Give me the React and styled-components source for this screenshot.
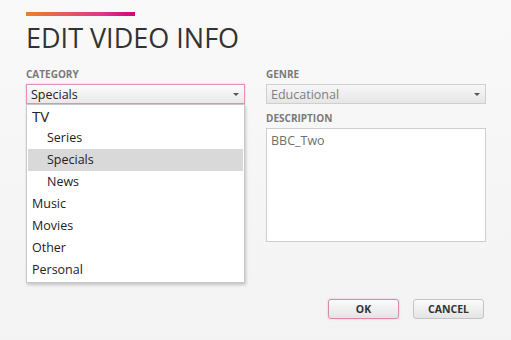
import styled, { createGlobalStyle } from "styled-components";

const categories = [
  { label: "TV", level: 0, big: true },
  { label: "Series", level: 1 },
  { label: "Specials", level: 1, selected: true },
  { label: "News", level: 1 },
  { label: "Music", level: 0 },
  { label: "Movies", level: 0 },
  { label: "Other", level: 0 },
  { label: "Personal", level: 0 },
];

export default function App() {
  return (
    <>
      <GlobalStyle />
      <Page>
        <AccentBar />
        <Title>EDIT VIDEO INFO</Title>
        <Columns>
          <Field>
            <Label>CATEGORY</Label>
            <Select focused>
              <span>Specials</span>
              <Arrow />
            </Select>
            <Menu>
              {categories.map((c) => (
                <MenuItem
                  key={c.label}
                  level={c.level}
                  big={c.big}
                  selected={c.selected}
                >
                  {c.label}
                </MenuItem>
              ))}
            </Menu>
          </Field>
          <Field>
            <Label>GENRE</Label>
            <Select disabled>
              <span>Educational</span>
              <Arrow />
            </Select>
            <Label spaced>DESCRIPTION</Label>
            <TextArea>BBC_Two</TextArea>
          </Field>
        </Columns>
        <Actions>
          <Button primary>OK</Button>
          <Button>CANCEL</Button>
        </Actions>
      </Page>
    </>
  );
}

const GlobalStyle = createGlobalStyle`
  html, body {
    margin: 0;
    padding: 0;
    background: #f6f6f6;
  }
  body {
    font-family: "Open Sans", "Noto Sans", sans-serif;
  }
`;

const Page = styled.div`
  width: 511px;
  height: 340px;
  box-sizing: border-box;
  padding: 12px 27px 21px 26px;
  display: flex;
  flex-direction: column;
  background: linear-gradient(to bottom, #f9f9f9, #f3f3f3);
`;

const AccentBar = styled.div`
  width: 109px;
  height: 4px;
  background: linear-gradient(to right, #e8832a, #e0358a 70%, #d6007a);
`;

const Title = styled.h1`
  margin: 5px 0 0;
  font-size: 27px;
  line-height: 34px;
  font-weight: 400;
  color: #333333;
  letter-spacing: 0;
`;

const Columns = styled.div`
  display: grid;
  grid-template-columns: 219px 220px;
  column-gap: 21px;
  margin-top: 12px;
`;

const Field = styled.div`
  position: relative;
  display: flex;
  flex-direction: column;
`;

const Label = styled.div`
  font-size: 10px;
  line-height: 14px;
  font-weight: 700;
  color: #7a7a7a;
  margin: ${({ spaced }) => (spaced ? "7px 0 3px" : "0 0 3px")};
`;

const Select = styled.div`
  height: 20px;
  box-sizing: border-box;
  display: flex;
  align-items: center;
  justify-content: space-between;
  padding: 0 5px 0 4px;
  font-size: 12.5px;
  color: ${({ disabled }) => (disabled ? "#808080" : "#222222")};
  border: 1px solid ${({ focused }) => (focused ? "#e38fc0" : "#cfcfcf")};
  background: ${({ focused }) =>
    focused
      ? "linear-gradient(to bottom, #fbfbfb, #e9e9e9)"
      : "linear-gradient(to bottom, #f7f7f7, #e6e6e6)"};
  box-shadow: ${({ focused }) =>
    focused ? "0 0 2px rgba(222, 90, 170, 0.35)" : "none"};
`;

const Arrow = styled.i`
  width: 0;
  height: 0;
  border-left: 3px solid transparent;
  border-right: 3px solid transparent;
  border-top: 3px solid #555;
`;

const Menu = styled.ul`
  position: absolute;
  top: 37px;
  left: 0;
  right: 0;
  margin: 0;
  padding: 0 1px 1px;
  list-style: none;
  background: #ffffff;
  border: 1px solid #c8c8c8;
  box-shadow: 1px 2px 3px rgba(0, 0, 0, 0.2);
  z-index: 2;
`;

const MenuItem = styled.li`
  height: 22px;
  line-height: 22px;
  padding-left: ${({ level }) => (level ? "19px" : "4px")};
  font-size: ${({ big }) => (big ? "15px" : "12.5px")};
  color: #222222;
  background: ${({ selected }) => (selected ? "#d9d9d9" : "transparent")};
`;

const TextArea = styled.div`
  height: 114px;
  box-sizing: border-box;
  padding: 3px 4px;
  font-size: 12.5px;
  color: #707070;
  background: #ffffff;
  border: 1px solid #cfcfcf;
`;

const Actions = styled.div`
  margin-top: auto;
  display: flex;
  justify-content: flex-end;
  gap: 14px;
`;

const Button = styled.button`
  width: 71px;
  height: 20px;
  padding: 0;
  font-family: inherit;
  font-size: 10.5px;
  font-weight: 700;
  color: #333333;
  border-radius: 3px;
  border: 1px solid ${({ primary }) => (primary ? "#d98aaa" : "#c4c4c4")};
  background: linear-gradient(to bottom, #fbfbfb, #e4e4e4);
  box-shadow: ${({ primary }) =>
    primary ? "0 0 2px rgba(222, 90, 150, 0.4)" : "none"};
`;
